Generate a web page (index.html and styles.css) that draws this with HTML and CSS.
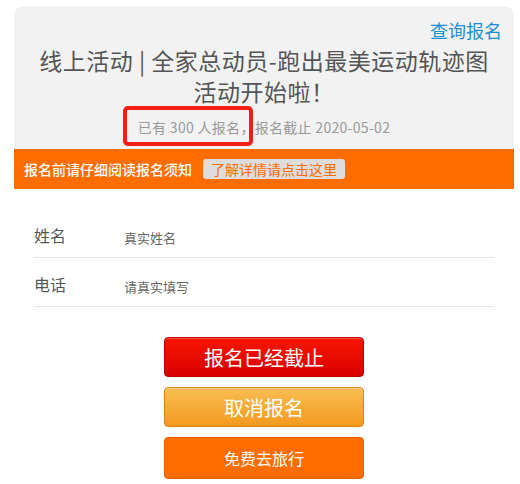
FILE: index.html
```html
<!DOCTYPE html>
<html lang="zh-CN">
<head>
<meta charset="utf-8">
<title>报名</title>
<link rel="stylesheet" href="styles.css">
</head>
<body>
<div class="page">
  <div class="card">
    <div class="head">
      <div class="query"><a href="#">查询报名</a></div>
      <h1 class="title">线上活动 | 全家总动员-跑出最美运动轨迹图<br>活动开始啦！</h1>
      <p class="meta"><span class="count">已有 300 人报名</span>，报名截止 2020-05-02</p>
    </div>
    <div class="notice">
      <span class="notice-text">报名前请仔细阅读报名须知</span>
      <a class="notice-btn" href="#">了解详情请点击这里</a>
    </div>
    <form class="form">
      <div class="row">
        <label class="label">姓名</label>
        <input class="input" type="text" placeholder="真实姓名">
      </div>
      <div class="row">
        <label class="label">电话</label>
        <input class="input" type="text" placeholder="请真实填写">
      </div>
    </form>
    <div class="actions">
      <button class="btn btn-red" type="button">报名已经截止</button>
      <button class="btn btn-yellow" type="button">取消报名</button>
      <button class="btn btn-orange" type="button">免费去旅行</button>
    </div>
  </div>
</div>
</body>
</html>
```

FILE: styles.css
```css
* { box-sizing: border-box; }
html, body { margin: 0; padding: 0; background: #fff; }
body {
  font-family: "Noto Sans CJK SC", "Noto Sans", "Liberation Sans", sans-serif;
  color: #555;
}
.page {
  padding: 6px 6px 0 14px;
}
.card {
  width: 500px;
  background: #fff;
}
.head {
  background: #f2f2f2;
  border-radius: 9px 9px 0 0;
  padding: 12px 12px 10px 12px;
  text-align: center;
}
.query {
  text-align: right;
  font-size: 18px;
  line-height: 24px;
}
.query a {
  color: #1a8fd8;
  text-decoration: none;
}
.title {
  margin: 3px 0 0 0;
  font-size: 23px;
  font-weight: normal;
  line-height: 31px;
  letter-spacing: 0.5px;
  color: #555;
}
.meta {
  margin: 8px 0 0 0;
  font-size: 14px;
  line-height: 24px;
  color: #999;
  letter-spacing: 0.3px;
}
.count {
  position: relative;
}
.count::after {
  content: "";
  position: absolute;
  left: -15px;
  right: -13px;
  top: -11px;
  bottom: -9px;
  border: 4px solid #f21d14;
  border-radius: 5px;
}
.notice {
  background: #ff6c00;
  height: 40px;
  display: flex;
  align-items: center;
  padding: 0 10px;
  gap: 11px;
}
.notice-text {
  color: #fff;
  font-size: 14px;
  font-weight: 500;
}
.notice-btn {
  background: #ddd;
  color: #ff6c00;
  font-size: 14px;
  line-height: 20px;
  height: 20px;
  padding: 0 8px;
  border-radius: 3px;
  text-decoration: none;
}
.form {
  margin: 20px 20px 0 20px;
}
.row {
  display: flex;
  align-items: flex-start;
  height: 49px;
  border-bottom: 1px solid #e5e5e5;
}
.label {
  width: 90px;
  flex: none;
  font-size: 16px;
  line-height: 24px;
  padding-top: 14px;
  color: #555;
}
.input {
  flex: 1;
  border: 0;
  outline: 0;
  background: transparent;
  font-family: inherit;
  font-size: 13px;
  line-height: 20px;
  height: 20px;
  padding: 0;
  margin-top: 19px;
  color: #666;
}
.input::placeholder {
  color: #666;
  opacity: 1;
}
.actions {
  display: flex;
  flex-direction: column;
  align-items: center;
  gap: 10px;
  margin-top: 30px;
}
.btn {
  width: 200px;
  height: 40px;
  border-radius: 4px;
  color: #fff;
  font-family: inherit;
  font-size: 20px;
  padding: 0;
  cursor: pointer;
}
.btn-red {
  background: linear-gradient(#f81600, #d80000);
  border: 1px solid #b80000;
  box-shadow: inset 0 1px 0 rgba(255,255,255,0.25);
}
.btn-yellow {
  background: linear-gradient(#f9bd53, #f39a1e);
  border: 1px solid #d9841a;
  box-shadow: inset 0 1px 0 rgba(255,255,255,0.3);
}
.btn-orange {
  background: #ff6c00;
  border: 1px solid #e06000;
  font-size: 16px;
  height: 42px;
}
```
